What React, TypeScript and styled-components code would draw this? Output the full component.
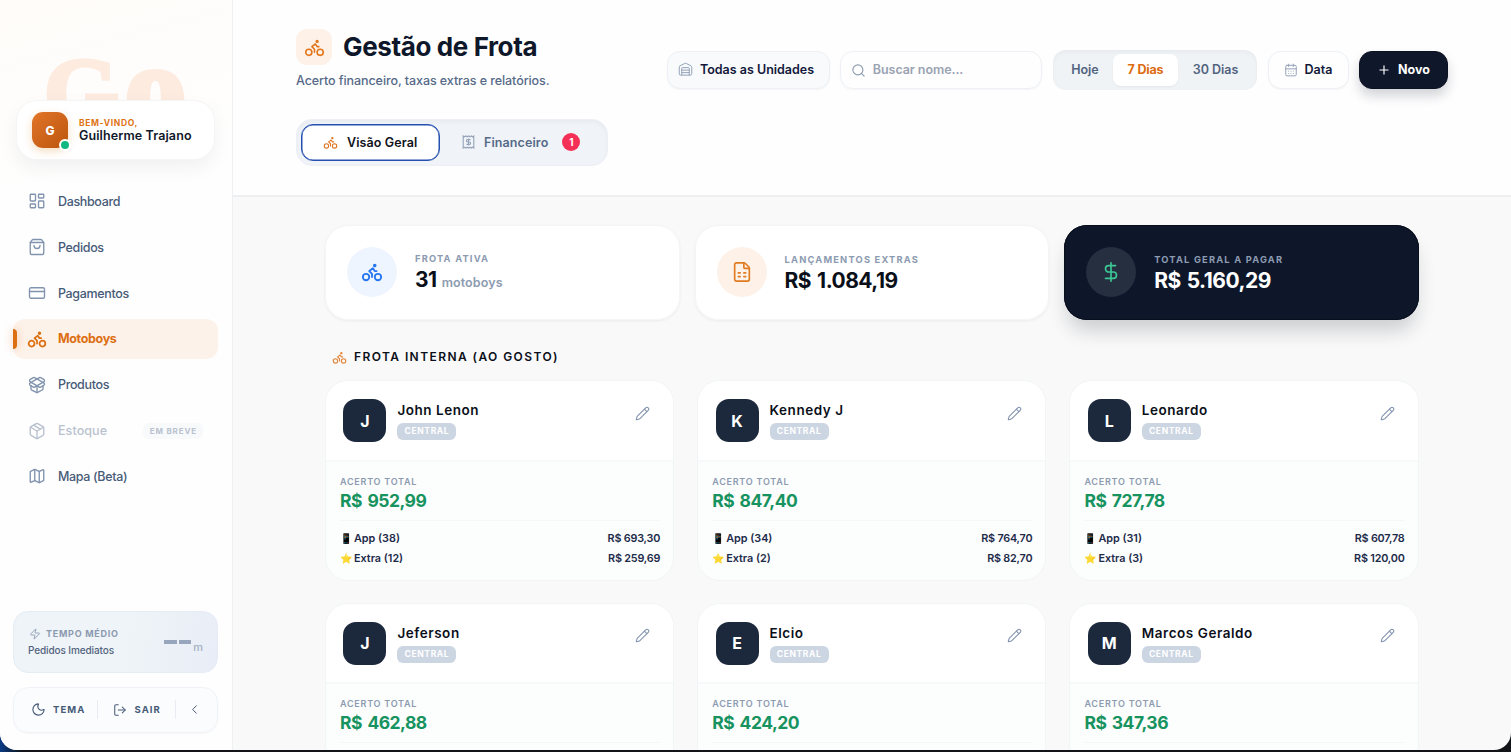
import styled, { createGlobalStyle, css } from 'styled-components'
import {
  Bike,
  CalendarDays,
  ChevronLeft,
  CreditCard,
  DollarSign,
  FileSpreadsheet,
  LayoutDashboard,
  LogOut,
  Map,
  Moon,
  Package,
  PackageOpen,
  Pencil,
  Plus,
  Search,
  ShoppingBag,
  Warehouse,
  Zap,
} from 'lucide-react'
import type { LucideIcon } from 'lucide-react'

const GlobalStyle = createGlobalStyle`
  * {
    box-sizing: border-box;
  }

  body {
    margin: 0;
    overflow: hidden;
    background: linear-gradient(90deg, #0b3b86 0, #0b2c5c 8px, #121417 22px, #121417 100%);
    font-family: Inter, 'Open Sans', sans-serif;
    color: #0f172a;
  }

  button {
    font-family: inherit;
    white-space: nowrap;
    cursor: pointer;
  }
`

const Window = styled.div`
  display: flex;
  width: 100%;
  height: 750px;
  overflow: hidden;
  border-radius: 0 0 17px 17px;
  background: #f9f9f9;
`

const Sidebar = styled.aside`
  flex: none;
  display: flex;
  flex-direction: column;
  width: 233px;
  padding: 0 15px 17px 13px;
  border-right: 1px solid #eff0f2;
  background: linear-gradient(165deg, #fffcf9 0, #fefefe 200px);
`

const Watermark = styled.svg`
  flex: none;
  display: block;
  width: 200px;
  height: 101px;
  fill: #fdebdf;
  stroke: #fdebdf;
  font-family: 'Liberation Serif', serif;
  font-weight: 700;
`

const UserCard = styled.div`
  flex: none;
  display: flex;
  align-items: center;
  gap: 11px;
  width: 197px;
  height: 58px;
  margin: 0 0 22.4px 4px;
  padding-left: 15px;
  border-radius: 20px;
  background: #fff;
  box-shadow:
    0 0 0 1px #f6f5f5,
    0 8px 20px rgb(15 23 42 / 6%);
`

const UserAvatar = styled.div`
  position: relative;
  display: grid;
  place-items: center;
  width: 36px;
  height: 36px;
  border-radius: 11px;
  background: linear-gradient(135deg, #e2762a, #bb540c);
  box-shadow: 0 3px 8px rgb(217 119 6 / 25%);
  color: #fff;
  font-size: 12px;
  font-weight: 800;

  &::after {
    content: '';
    position: absolute;
    right: -3px;
    bottom: -3px;
    width: 8px;
    height: 8px;
    border: 2px solid #fff;
    border-radius: 50%;
    background: #10b981;
  }
`

const Welcome = styled.div`
  margin: 1px 0 0;
  font-size: 8.5px;
  font-weight: 700;
  line-height: 11px;
  letter-spacing: 0.63px;
  color: #dd7416;
`

const UserName = styled.div`
  font-size: 12.5px;
  font-weight: 600;
  line-height: 14px;
  letter-spacing: 0.11px;
`

const Nav = styled.nav`
  display: flex;
  flex-direction: column;
  gap: 5.83px;
`

const NavItem = styled.a<{ $active?: boolean; $muted?: boolean }>`
  position: relative;
  display: flex;
  align-items: center;
  gap: 12px;
  width: 205px;
  height: 40px;
  padding: 0 15px;
  border-radius: 12px;
  font-size: 12.5px;
  font-weight: 500;
  letter-spacing: -0.35px;
  color: #475b78;

  svg {
    flex: none;
    color: #8193ae;
  }

  ${({ $muted }) =>
    $muted &&
    css`
      letter-spacing: 0.08px;
      color: #b9c2cf;

      svg {
        color: #b9c2cf;
      }
    `}

  ${({ $active }) =>
    $active &&
    css`
      background: #fdf2e9;
      font-weight: 700;
      color: #dc6f12;

      svg {
        margin: 0 -1px;
        color: #dc6f12;
      }

      &::before {
        content: '';
        position: absolute;
        left: 0;
        top: 10px;
        width: 4px;
        height: 20px;
        border-radius: 0 4px 4px 0;
        background: #dc6f12;
        box-shadow: 0 0 8px rgb(234 88 12 / 35%);
      }
    `}
`

const SoonTag = styled.span`
  margin-left: auto;
  padding: 0 6px 0 7px;
  border-radius: 6px;
  background: #f7f9fb;
  font-size: 8px;
  font-weight: 700;
  line-height: 16px;
  letter-spacing: 0.86px;
  color: #b9c2cf;
`

const TimeCard = styled.div`
  flex: none;
  display: flex;
  align-items: center;
  justify-content: space-between;
  width: 205px;
  height: 62px;
  margin: auto 0 14px;
  padding: 0 15px;
  border: 1px solid #e6ecf5;
  border-radius: 15px;
  background: linear-gradient(100deg, #eff4f8 55%, #e8edf7);
`

const TimeLabel = styled.div`
  display: flex;
  align-items: center;
  gap: 5px;
  margin-bottom: 3px;
  font-size: 9px;
  font-weight: 700;
  line-height: 13px;
  letter-spacing: 0.74px;
  color: #8c9ab0;
`

const TimeNote = styled.div`
  margin-left: -1px;
  font-size: 10px;
  font-weight: 500;
  line-height: 14px;
  letter-spacing: -0.11px;
  color: #52637d;
`

const TimeValue = styled.div`
  display: flex;
  align-items: center;
  gap: 2px;
  color: #97a6bc;
`

const Dash = styled.span`
  width: 12.5px;
  height: 3.5px;
  background: currentColor;
`

const TimeUnit = styled.span`
  margin: 9px -1px 0 0;
  font-size: 11px;
  font-weight: 500;
  line-height: 12px;
  color: #a5b1c4;
`

const Actions = styled.div`
  flex: none;
  display: flex;
  align-items: center;
  width: 205px;
  height: 46px;
  padding: 0 0 1px 17px;
  border: 1px solid #eff3f7;
  border-radius: 15px;
  background: #fafcfd;
  box-shadow: 0 1px 2px rgb(15 23 42 / 3%);
`

const Action = styled.button`
  display: flex;
  align-items: center;
  gap: 7px;
  padding: 0;
  border: 0;
  background: none;
  font-size: 9.5px;
  font-weight: 700;
  letter-spacing: 1.1px;
  color: #475b78;
`

const ActionDivider = styled.span<{ $left: number; $right: number }>`
  flex: none;
  width: 1px;
  height: 19px;
  margin: 0 ${({ $right }) => $right}px 0 ${({ $left }) => $left}px;
  background: #e8edf3;
`

const Main = styled.main`
  flex: 1;
  min-width: 0;
`

const Header = styled.header`
  height: 197px;
  padding: 29px 63px 0;
  border-bottom: 2px solid #eeeff1;
  background: #fefefe;
`

const HeaderTop = styled.div`
  display: flex;
  justify-content: space-between;
  height: 90px;
`

const TitleRow = styled.div`
  display: flex;
  align-items: center;
  gap: 11px;
  height: 36px;
`

const TitleIcon = styled.span`
  display: grid;
  place-items: center;
  width: 36px;
  height: 36px;
  border-radius: 11px;
  background: #fdf1e8;
  color: #e3761a;
`

const Title = styled.h1`
  margin: -2px 0 0;
  font-size: 26px;
  font-weight: 700;
  letter-spacing: -0.38px;
  white-space: nowrap;
`

const Subtitle = styled.p`
  margin: 7px 0 0;
  font-size: 12.5px;
  font-weight: 500;
  line-height: 18px;
  letter-spacing: -0.08px;
  white-space: nowrap;
  color: #566a88;
`

const Toolbar = styled.div`
  display: flex;
  align-items: center;
  height: 40px;
  margin-top: 21px;
  gap: 10.5px;
`

const ToolButton = styled.button<{ $width: number; $tinted?: boolean; $dark?: boolean }>`
  display: flex;
  align-items: center;
  justify-content: center;
  gap: 7px;
  width: ${({ $width }) => $width}px;
  height: 38px;
  padding: 0 ${({ $tinted }) => ($tinted ? 5 : 0)}px 1px 0;
  border: 1px solid #edf1f5;
  border-radius: 13px;
  background: ${({ $tinted }) => ($tinted ? '#f8fafc' : '#fefefe')};
  box-shadow: 0 1px 2px rgb(15 23 42 / 4%);
  font-size: 12.5px;
  font-weight: 600;
  color: #12183a;

  svg {
    color: #94a3b8;
  }

  ${({ $dark }) =>
    $dark &&
    css`
      border-color: #0c1222;
      background: #0f172a;
      box-shadow: 0 7px 12px rgb(15 23 42 / 18%);
      font-weight: 700;
      color: #fff;

      svg {
        color: #fff;
      }
    `}
`

const SearchField = styled.label`
  display: flex;
  align-items: center;
  gap: 7px;
  width: 202px;
  height: 38px;
  margin: 0 0.7px 0 -0.7px;
  padding-left: 10px;
  border: 1px solid #edf1f5;
  border-radius: 13px;
  box-shadow: 0 1px 2px rgb(15 23 42 / 4%);
  color: #8c9ab0;
`

const SearchInput = styled.input`
  flex: 1;
  min-width: 0;
  padding: 0 0 1px;
  border: 0;
  outline: none;
  background: none;
  font: 600 12.5px Inter, sans-serif;
  letter-spacing: -0.06px;

  &::placeholder {
    opacity: 1;
    color: #9aa3b2;
  }
`

const Periods = styled.div`
  display: flex;
  width: 204px;
  height: 40px;
  padding: 4px;
  border-radius: 13px;
  background: #eff3f6;
  box-shadow: inset 0 2px 4px rgb(15 23 42 / 4%);
`

const Period = styled.button<{ $width: number; $active?: boolean }>`
  width: ${({ $width }) => $width}px;
  padding: 0 0 2px;
  border: 0;
  border-radius: 8px;
  background: ${({ $active }) => ($active ? '#fff' : 'none')};
  box-shadow: ${({ $active }) => ($active ? '0 1px 2px rgb(15 23 42 / 5%)' : 'none')};
  font-size: 12.5px;
  font-weight: ${({ $active }) => ($active ? 700 : 600)};
  letter-spacing: ${({ $active }) => ($active ? -0.18 : -0.03)}px;
  color: ${({ $active }) => ($active ? '#dd6b10' : '#52637f')};
`

const Tabs = styled.div`
  display: flex;
  width: 312px;
  height: 47px;
  padding: 4px;
  border: 1px solid #ecf0f4;
  border-radius: 16px;
  background: #f0f4f8;
  box-shadow: inset 0 2px 4px rgb(15 23 42 / 4%);
`

const Tab = styled.button<{ $active?: boolean }>`
  display: flex;
  align-items: center;
  gap: 9px;
  height: 37px;
  padding: 0 21px 1px;
  border: 1px solid transparent;
  border-radius: 12px;
  background: none;
  font-size: 12.5px;
  font-weight: 600;
  letter-spacing: 0.1px;
  color: #566a88;

  ${({ $active }) =>
    $active &&
    css`
      gap: 9px;
      width: 139px;
      border: 1.5px solid #2450b0;
      box-shadow: inset 0 0 0 0.5px #2450b0;
      background: #fff;
      color: #10131c;

      svg {
        color: #dd7420;
      }
    `}
`

const Counter = styled.span`
  display: grid;
  place-items: center;
  width: 18px;
  height: 18px;
  margin-left: 5px;
  border-radius: 50%;
  background: #f43056;
  font-size: 10px;
  font-weight: 700;
  color: #fff;
`

const Content = styled.section`
  padding: 27.5px 92px 0;
`

const Stats = styled.div`
  display: grid;
  grid-template-columns: repeat(3, 1fr);
  gap: 14.7px;
  width: 1094px;
`

const StatCard = styled.div<{ $dark?: boolean }>`
  display: flex;
  align-items: center;
  gap: 18px;
  height: 95px;
  padding-left: 22px;
  border-radius: 23px;
  background: ${({ $dark }) => ($dark ? '#0e172a' : '#fff')};
  color: ${({ $dark }) => ($dark ? '#fff' : '#0b0f19')};
  box-shadow: ${({ $dark }) =>
    $dark
      ? 'inset 0 0 0 1px #080e1c, 0 14px 20px -4px rgb(15 23 42 / 20%)'
      : 'inset 0 0 0 1px #f3f5f6, 0 1px 3px rgb(15 23 42 / 6%)'};
`

const StatIcon = styled.span<{ $bg: string; $color: string }>`
  display: grid;
  place-items: center;
  width: 50px;
  height: 50px;
  border-radius: 50%;
  background: ${({ $bg }) => $bg};
  color: ${({ $color }) => $color};
`

const StatLabel = styled.div`
  margin-top: 3px;
  font-size: 9.3px;
  font-weight: 700;
  line-height: 13px;
  letter-spacing: 1.2px;
  white-space: nowrap;
  color: #8c9bb1;
`

const StatValue = styled.div`
  display: flex;
  align-items: baseline;
  gap: 5px;
  padding-top: 2px;
  font-size: 21px;
  font-weight: 700;
  line-height: 26px;
  letter-spacing: -0.5px;
  word-spacing: 1.5px;
  white-space: nowrap;
`

const StatUnit = styled.small`
  font-size: 12.5px;
  font-weight: 600;
  letter-spacing: 0.1px;
  color: #8c9bb1;
`

const SectionTitle = styled.h2`
  display: flex;
  align-items: center;
  gap: 7px;
  height: 20px;
  margin: 26.5px 0 14px 7px;
  font-size: 12px;
  font-weight: 600;
  letter-spacing: 1.42px;
  color: #0b0f19;

  svg {
    position: relative;
    top: 1px;
    color: #e08538;
  }
`

const Riders = styled.div`
  display: grid;
  grid-template-columns: repeat(3, 1fr);
  gap: 22px 23px;
  width: 1093.6px;
`

const RiderCard = styled.article`
  height: 200.5px;
  overflow: hidden;
  border: 1px solid #f1f5f6;
  border-radius: 23px;
  background: #fcfdfd;
`

const RiderHead = styled.div`
  display: flex;
  gap: 11px;
  height: 80.5px;
  padding: 18px 23px 0 17.4px;
  border-bottom: 2px solid #f8f9fa;
  background: #fff;
`

const RiderAvatar = styled.div`
  display: grid;
  place-items: center;
  flex: none;
  width: 43px;
  height: 43px;
  border-radius: 13px;
  background: #1c283b;
  font-size: 16px;
  font-weight: 700;
  color: #fff;
`

const RiderInfo = styled.div`
  flex: 1;
`

const RiderName = styled.div`
  margin: 2px 0 4px;
  font-size: 13.5px;
  font-weight: 600;
  line-height: 18px;
  letter-spacing: 0.54px;
  color: #0b0f19;
`

const Unit = styled.span`
  display: block;
  width: 59px;
  height: 17px;
  border-radius: 6px;
  background: #ccd5e2;
  font-size: 8.5px;
  font-weight: 700;
  line-height: 16px;
  letter-spacing: 0.62px;
  text-align: center;
  color: #fff;
`

const EditButton = styled.button`
  align-self: flex-start;
  display: flex;
  margin-top: 6.5px;
  padding: 0;
  border: 0;
  background: none;
  color: #8193ae;
`

const RiderBody = styled.div`
  padding: 13px 13px 0 14px;
`

const TotalLabel = styled.div`
  font-size: 9px;
  font-weight: 600;
  line-height: 13px;
  letter-spacing: 0.76px;
  color: #8c9bb1;
`

const Total = styled.div`
  padding-bottom: 6px;
  border-bottom: 1px solid #f4f6f8;
  font-size: 17.5px;
  font-weight: 700;
  line-height: 26px;
  letter-spacing: -0.5px;
  word-spacing: 1.8px;
  color: #179360;
`

const Lines = styled.div`
  padding-top: 8px;
`

const Line = styled.div`
  display: flex;
  align-items: center;
  gap: 2px;
  height: 20px;
  font-size: 10.8px;
  font-weight: 600;
  color: #1d2b4a;
`

const Emoji = styled.span`
  display: flex;
  justify-content: center;
  width: 12px;
  margin-top: -2px;
  font-size: 10px;
`

const LineValue = styled.span`
  margin-left: auto;
  letter-spacing: -0.2px;
`

interface NavEntry {
  icon: LucideIcon
  label: string
  active?: boolean
  soon?: boolean
}

const navEntries: NavEntry[] = [
  { icon: LayoutDashboard, label: 'Dashboard' },
  { icon: ShoppingBag, label: 'Pedidos' },
  { icon: CreditCard, label: 'Pagamentos' },
  { icon: Bike, label: 'Motoboys', active: true },
  { icon: PackageOpen, label: 'Produtos' },
  { icon: Package, label: 'Estoque', soon: true },
  { icon: Map, label: 'Mapa (Beta)' },
]

const riders = [
  { name: 'John Lenon', total: 'R$ 952,99', rides: 38, app: 'R$ 693,30', extras: 12, extra: 'R$ 259,69' },
  { name: 'Kennedy J', total: 'R$ 847,40', rides: 34, app: 'R$ 764,70', extras: 2, extra: 'R$ 82,70' },
  { name: 'Leonardo', total: 'R$ 727,78', rides: 31, app: 'R$ 607,78', extras: 3, extra: 'R$ 120,00' },
  { name: 'Jeferson', total: 'R$ 462,88' },
  { name: 'Elcio', total: 'R$ 424,20' },
  { name: 'Marcos Geraldo', total: 'R$ 347,36' },
]

const ReceiptIcon = () => (
  <svg width="13" height="14" viewBox="0 0 13 14" fill="none" stroke="#94a3b8" strokeWidth="1.1">
    <path d="M1.2 1l1.3.8L3.8 1l1.3.8L6.5 1l1.4.8L9.2 1l1.3.8 1.3-.8v12l-1.3-.8-1.3.8-1.3-.8-1.4.8-1.4-.8-1.3.8-1.3-.8-1.3.8z" />
    <path d="M8.5 4.6H5.6a1.2 1.2 0 0 0 0 2.4h1.8a1.2 1.2 0 0 1 0 2.4H4.4M6.5 3.4v7.2" />
  </svg>
)

export default function App() {
  return (
    <>
      <GlobalStyle />
      <Window>
        <Sidebar>
          <Watermark viewBox="0 0 200 101" aria-hidden>
            <text x="31" y="124" fontSize="96" strokeWidth="4">G</text>
            <text x="112" y="130" fontSize="122" strokeWidth="6">o</text>
          </Watermark>
          <UserCard>
            <UserAvatar>G</UserAvatar>
            <div>
              <Welcome>BEM-VINDO,</Welcome>
              <UserName>Guilherme Trajano</UserName>
            </div>
          </UserCard>

          <Nav>
            {navEntries.map(({ icon: Icon, label, active, soon }) => (
              <NavItem key={label} $active={active} $muted={soon}>
                <Icon size={active ? 20 : 18} strokeWidth={active ? 2.1 : 1.8} />
                {label}
                {soon && <SoonTag>EM BREVE</SoonTag>}
              </NavItem>
            ))}
          </Nav>

          <TimeCard>
            <div>
              <TimeLabel>
                <Zap size={12} strokeWidth={1.8} />
                TEMPO MÉDIO
              </TimeLabel>
              <TimeNote>Pedidos Imediatos</TimeNote>
            </div>
            <TimeValue>
              <Dash />
              <Dash />
              <TimeUnit>m</TimeUnit>
            </TimeValue>
          </TimeCard>

          <Actions>
            <Action>
              <Moon size={15} strokeWidth={1.8} />
              TEMA
            </Action>
            <ActionDivider $left={12} $right={15} />
            <Action>
              <LogOut size={14} strokeWidth={1.8} />
              SAIR
            </Action>
            <ActionDivider $left={14} $right={11} />
            <Action aria-label="Recolher">
              <ChevronLeft size={15} strokeWidth={1.6} />
            </Action>
          </Actions>
        </Sidebar>

        <Main>
          <Header>
            <HeaderTop>
              <div>
                <TitleRow>
                  <TitleIcon>
                    <Bike size={21} strokeWidth={1.8} />
                  </TitleIcon>
                  <Title>Gestão de Frota</Title>
                </TitleRow>
                <Subtitle>Acerto financeiro, taxas extras e relatórios.</Subtitle>
              </div>
              <Toolbar>
                <ToolButton $width={163} $tinted>
                  <Warehouse size={15} strokeWidth={1.6} />
                  Todas as Unidades
                </ToolButton>
                <SearchField>
                  <Search size={15} strokeWidth={1.8} />
                  <SearchInput placeholder="Buscar nome..." />
                </SearchField>
                <Periods>
                  <Period $width={56}>Hoje</Period>
                  <Period $width={65} $active>7 Dias</Period>
                  <Period $width={75}>30 Dias</Period>
                </Periods>
                <ToolButton $width={81}>
                  <CalendarDays size={14} strokeWidth={1.7} />
                  Data
                </ToolButton>
                <ToolButton $width={89} $dark>
                  <Plus size={14} strokeWidth={2} />
                  Novo
                </ToolButton>
              </Toolbar>
            </HeaderTop>
            <Tabs>
              <Tab $active>
                <Bike size={15} strokeWidth={1.7} />
                Visão Geral
              </Tab>
              <Tab>
                <ReceiptIcon />
                Financeiro
                <Counter>1</Counter>
              </Tab>
            </Tabs>
          </Header>

          <Content>
            <Stats>
              <StatCard>
                <StatIcon $bg="#eff5ff" $color="#2676f0">
                  <Bike size={22} strokeWidth={2} />
                </StatIcon>
                <div>
                  <StatLabel>FROTA ATIVA</StatLabel>
                  <StatValue>
                    31 <StatUnit>motoboys</StatUnit>
                  </StatValue>
                </div>
              </StatCard>
              <StatCard>
                <StatIcon $bg="#fdf1e8" $color="#e07b20">
                  <FileSpreadsheet size={22} strokeWidth={1.8} />
                </StatIcon>
                <div>
                  <StatLabel>LANÇAMENTOS EXTRAS</StatLabel>
                  <StatValue>R$ 1.084,19</StatValue>
                </div>
              </StatCard>
              <StatCard $dark>
                <StatIcon $bg="#262f40" $color="#3cc795">
                  <DollarSign size={22} strokeWidth={1.8} />
                </StatIcon>
                <div>
                  <StatLabel>TOTAL GERAL A PAGAR</StatLabel>
                  <StatValue>R$ 5.160,29</StatValue>
                </div>
              </StatCard>
            </Stats>

            <SectionTitle>
              <Bike size={15} strokeWidth={1.8} />
              FROTA INTERNA (AO GOSTO)
            </SectionTitle>

            <Riders>
              {riders.map((rider) => (
                <RiderCard key={rider.name}>
                  <RiderHead>
                    <RiderAvatar>{rider.name[0]}</RiderAvatar>
                    <RiderInfo>
                      <RiderName>{rider.name}</RiderName>
                      <Unit>CENTRAL</Unit>
                    </RiderInfo>
                    <EditButton aria-label="Editar">
                      <Pencil size={15} strokeWidth={1.7} />
                    </EditButton>
                  </RiderHead>
                  <RiderBody>
                    <TotalLabel>ACERTO TOTAL</TotalLabel>
                    <Total>{rider.total}</Total>
                    {rider.app && (
                      <Lines>
                        <Line>
                          <Emoji>📱</Emoji>
                          App ({rider.rides})
                          <LineValue>{rider.app}</LineValue>
                        </Line>
                        <Line>
                          <Emoji>⭐</Emoji>
                          Extra ({rider.extras})
                          <LineValue>{rider.extra}</LineValue>
                        </Line>
                      </Lines>
                    )}
                  </RiderBody>
                </RiderCard>
              ))}
            </Riders>
          </Content>
        </Main>
      </Window>
    </>
  )
}
